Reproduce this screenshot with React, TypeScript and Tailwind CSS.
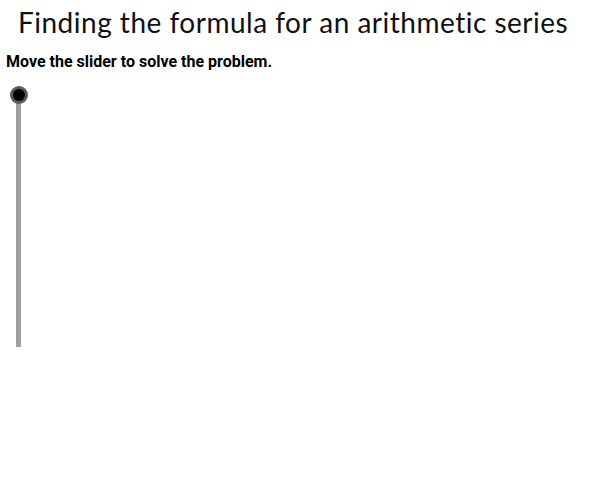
export default function App() {
  return (
    <div className="w-[600px] h-[480px] bg-white overflow-hidden">
      <h1 className="pl-[18px] pt-[2px] h-[44px] text-[28px] leading-[40px] text-[#111] font-['Lato',sans-serif] font-normal tracking-[0.5px]">
        Finding the formula for an arithmetic series
      </h1>
      <p className="pl-[6px] h-[35px] text-[16px] leading-[36px] font-bold text-black font-['Roboto',sans-serif]">
        Move the slider to solve the problem.
      </p>
      {/* vertical slider */}
      <div className="relative ml-[10px] mt-[7px] w-[18px] h-[261px]">
        <div className="absolute left-[6px] top-[9px] w-[5px] h-[252px] bg-[#a0a0a0]" />
        <div className="absolute left-0 top-0 w-[18px] h-[18px] rounded-full bg-[#5a5a5a] flex items-center justify-center">
          <div className="w-[12px] h-[12px] rounded-full bg-black" />
        </div>
      </div>
    </div>
  );
}
